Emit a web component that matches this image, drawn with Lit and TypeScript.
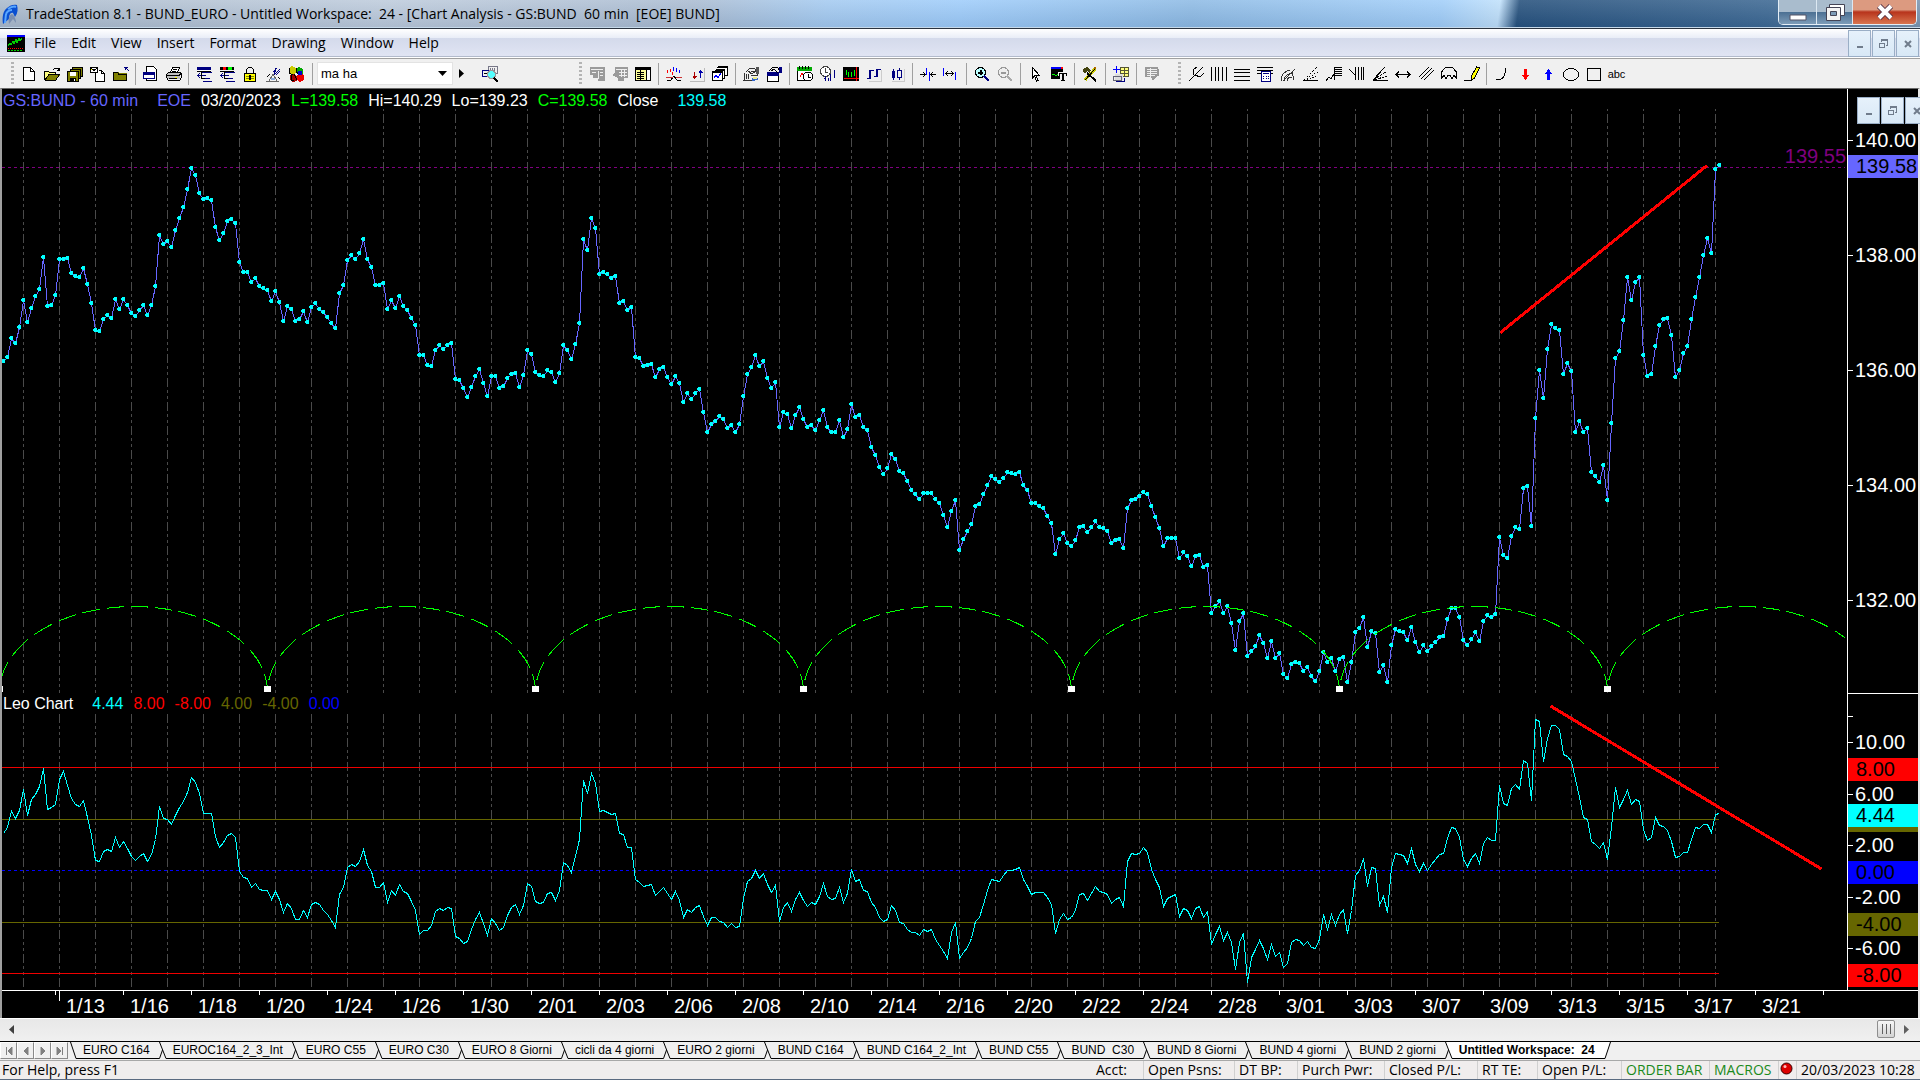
import { LitElement, html, css, svg, SVGTemplateResult } from "lit";
import { customElement, state } from "lit/decorators.js";
import { classMap } from "lit/directives/class-map.js";

/* ---------- market data ---------- */

interface Block {
  base: number;
  unit: number;
  values: number[];
}

/** Hourly closes, in chart rows: row = base + value / unit. */
const CLOSES: Block[] = [
  {
    base: 130,
    unit: 2.75,
    values: [
      635, 624, 572, 585, 541, 467, 528, 489, 456, 437, 349, 484, 481, 453, 354, 354, 352, 393, 401, 404,
      379, 423, 475, 550, 552, 519, 508, 517, 464, 492, 464, 481, 503, 511, 495, 481, 508, 481, 429, 288,
      313, 305, 321, 275, 242, 211, 162, 104, 123, 173, 189, 187, 192, 268, 302, 283, 250, 244, 255, 363,
      390, 390, 418, 407, 429, 434, 440, 470, 442, 473, 525, 484, 492, 525, 519, 497, 528, 486, 475, 492,
      500, 514, 530, 544, 448, 426, 357, 343, 354, 338, 299, 354, 376, 426, 426, 420, 492, 467, 489, 456,
      484, 495, 517, 536, 618, 618, 646, 649, 605, 591, 602, 591, 585, 684, 687, 709, 734, 706, 676, 657,
      695, 731, 676, 676, 709, 704, 682, 671, 668, 706, 673, 605, 616, 665, 673, 676, 660, 665, 693, 668,
      591, 605, 629, 588, 530, 299, 330, 242, 269, 396, 390, 396, 407, 401, 475, 470, 495, 486, 624, 627,
    ],
  },
  {
    base: 200,
    unit: 3,
    values: [
      497, 494, 492, 531, 507, 501, 531, 551, 528, 549, 605, 579, 597, 579, 567, 635, 695, 671, 663, 648,
      657, 684, 675, 696, 672, 588, 521, 501, 465, 497, 483, 534, 563, 546, 681, 635, 642, 684, 645, 621,
      657, 681, 675, 690, 660, 630, 681, 696, 696, 660, 711, 687, 611, 651, 645, 681, 690, 741, 765, 801,
      822, 804, 762, 777, 813, 819, 843, 870, 882, 897, 879, 879, 879, 897, 909, 945, 981, 933, 900, 1050,
      1017, 993, 972, 918, 912, 882, 855, 828, 837, 846, 834, 816, 819, 822, 816, 855, 870, 909, 909, 918,
      924, 948, 969, 1062, 1017, 999, 1029, 1038, 1020, 981, 978, 996, 981, 963, 981, 984, 993, 1029, 1020, 1017,
      1044, 924, 900, 897, 888, 876, 882, 918, 951, 984, 1038, 1014, 1014, 1014, 1074, 1056, 1068, 1098, 1068, 1065,
      1101, 1095, 1239, 1218, 1203, 1239, 1218, 1269, 1350, 1263, 1239, 1368, 1353, 1338, 1305, 1329, 1374, 1323, 1374, 1359,
    ],
  },
  {
    base: 130,
    unit: 2.75,
    values: [
      1497, 1507, 1469, 1463, 1466, 1488, 1477, 1501, 1515, 1488, 1435, 1463, 1452, 1488, 1455, 1449, 1518, 1463, 1380, 1369,
      1339, 1422, 1378, 1383, 1490, 1471, 1518, 1416, 1372, 1378, 1380, 1402, 1367, 1408, 1435, 1416, 1433, 1419, 1408, 1394,
      1391, 1345, 1314, 1314, 1339, 1402, 1416, 1400, 1380, 1405, 1350, 1334, 1339, 1331, 1119, 1169, 1177, 1116, 1092, 1097,
      984, 980, 1089, 792, 660, 737, 602, 534, 545, 550, 671, 640, 662, 830, 800, 830, 819, 940, 951, 968,
      921, 1017, 806, 627, 607, 522, 404, 467, 418, 404, 618, 676, 671, 594, 536, 519, 517, 563, 679, 660,
      613, 594, 519, 459, 404, 343, 297, 338, 107, 96,
    ],
  },
];

/** Leo Chart oscillator, same row encoding. */
const OSCILLATOR: Block[] = [
  {
    base: 690,
    unit: 3,
    values: [
      428, 412, 362, 385, 360, 298, 374, 328, 311, 288, 235, 357, 352, 341, 266, 244, 284, 324, 341, 349,
      329, 382, 436, 511, 514, 484, 476, 484, 440, 472, 452, 475, 497, 511, 497, 488, 514, 491, 448, 349,
      385, 388, 402, 376, 350, 332, 307, 262, 276, 309, 370, 370, 370, 438, 471, 456, 436, 430, 442, 543,
      562, 565, 592, 580, 598, 601, 601, 626, 604, 628, 667, 638, 654, 688, 688, 660, 682, 641, 637, 642,
      661, 671, 689, 712, 613, 592, 532, 523, 529, 514, 478, 526, 544, 592, 590, 577, 637, 601, 616, 581,
      604, 610, 632, 659, 733, 721, 721, 706, 662, 655, 661, 650, 654, 739, 743, 760, 752, 717, 687, 667,
      698, 734, 683, 699, 721, 712, 676, 650, 643, 673, 645, 580, 589, 632, 640, 637, 610, 607, 629, 601,
      517, 526, 547, 499, 448, 271, 310, 250, 280, 364, 361, 367, 371, 370, 430, 431, 472, 472, 568, 575,
      589, 586, 583, 616, 604, 592, 610, 626, 604, 631, 680, 658, 666, 651, 646, 679, 705, 682, 682, 693,
      695, 712, 700, 712, 709, 623, 574, 565, 541, 563, 550, 581, 605, 586, 694, 652, 637, 664, 627, 607,
      631, 647, 635, 643, 619, 580, 617, 628, 625, 592, 637, 608, 536, 572, 567, 601, 602, 637, 652, 681,
      694, 687, 646, 661, 696, 700, 716, 727, 725, 736, 718, 724, 716, 747, 766, 783, 805, 725, 697, 803,
      785, 772, 743, 692, 680, 641, 599, 568, 571, 574, 556, 541, 541, 538, 530, 568, 587, 611, 607, 607,
      607, 622, 643, 730, 686, 669, 686, 681, 659, 613, 610, 629, 609, 587, 604, 607, 613, 640, 628, 622,
      647, 514, 490, 493, 488, 472, 487, 536, 567, 592, 649, 623, 619, 613, 677, 655, 660, 683, 655, 649,
      680, 664, 762, 733, 709, 749, 727, 757, 838, 757, 730, 875, 802, 778, 751, 774, 808, 763, 799, 785,
      830, 818, 757, 748, 751, 766, 754, 771, 775, 748, 673, 716, 673, 706, 673, 658, 730, 659, 556, 541,
      503, 589, 530, 533, 646, 619, 667, 532, 490, 493, 496, 518, 473, 521, 544, 519, 539, 522, 506, 491,
      490, 443, 412, 415, 440, 508, 527, 505, 488, 520, 458, 442, 451, 451, 284, 338, 346, 294, 281, 298,
      211, 220, 331, 88, 92, 214, 145, 106, 106, 116, 193, 199, 214, 266, 320, 380, 386, 452, 463, 475,
      455, 508, 410, 290, 352, 328, 301, 343, 328, 332, 418, 451, 442, 380, 404, 409, 421, 452, 502, 499,
      487, 487, 446, 412, 415, 403, 403, 427, 371, 370,
    ],
  },
];

const FIRST_BAR = 3;
const BAR_STEP = 4;
const LAST_BAR = 1719;

function toPoints(blocks: Block[]): [number, number][] {
  return blocks
    .flatMap((b) => b.values.map((v) => Math.round(b.base + v / b.unit)))
    .map((y, i) => [FIRST_BAR + i * BAR_STEP, y] as [number, number]);
}

const pricePoints = toPoints(CLOSES);
const oscPoints = toPoints(OSCILLATOR);

const toPolyline = (pts: [number, number][]) => pts.map(([x, y]) => `${x + 0.5},${y + 0.5}`).join(" ");

const dotsPath = pricePoints.map(([x, y]) => `M${x - 1} ${y - 2}h3v4h-3v-1h-1v-2h1z`).join("");

const sessionLines = Array.from({ length: 48 }, (_, k) => 23.5 + 36 * k);

const CYCLE = 268;
const cycleAnchors = Array.from({ length: 7 }, (_, k) => -0.5 + CYCLE * k);

/** Half ellipse split into 18-on / 6-off dashes counted along the major axis. */
function cycleArc(start: number): string {
  const rx = CYCLE / 2;
  const ry = 86;
  const cx = start + rx;
  const cy = 692.5;
  const period = 24;
  let phase = 12;
  let px = start;
  let py = cy;
  let pen = false;
  let d = "";
  for (let i = 1; i <= 900; i++) {
    const t = Math.PI - (Math.PI * i) / 900;
    const x = cx + rx * Math.cos(t);
    const y = cy - ry * Math.sin(t);
    phase = (phase + Math.max(Math.abs(x - px), Math.abs(y - py))) % period;
    const on = phase < 18 && x < 1845;
    if (on) {
      d += `${pen ? "L" : "M"}${x.toFixed(1)} ${y.toFixed(1)}`;
    }
    pen = on;
    px = x;
    py = y;
  }
  return d;
}

const DATES = [
  "1/13", "1/16", "1/18", "1/20", "1/24", "1/26", "1/30", "2/01", "2/03", "2/06", "2/08", "2/10", "2/14",
  "2/16", "2/20", "2/22", "2/24", "2/28", "3/01", "3/03", "3/07", "3/09", "3/13", "3/15", "3/17", "3/21",
];

const OSC_TAGS = [
  { value: 8, name: "red" },
  { value: 4, name: "olive" },
  { value: 4.44, name: "cyan" },
  { value: 0, name: "blue" },
  { value: -4, name: "olive" },
  { value: -8, name: "red" },
];

const TABS = [
  "EURO C164", "EUROC164_2_3_Int", "EURO C55", "EURO C30", "EURO 8 Giorni", "cicli da 4 giorni",
  "EURO 2 giorni", "BUND C164", "BUND C164_2_Int", "BUND C55", "BUND\u00a0 C30", "BUND 8 Giorni",
  "BUND 4 giorni", "BUND 2 giorni", "Untitled Workspace:\u00a0 24",
];

/* ---------- toolbar icons, 16 x 16 ---------- */

const K = "#000";
const N = "#000080";
const line = (d: string, c = K) => svg`<path d=${d} fill="none" stroke=${c} />`;
const fill = (d: string, c: string) => svg`<path d=${d} fill=${c} />`;

const ICONS: Record<string, SVGTemplateResult> = {
  New: svg`${fill("M2 1h8l4 4v10H2z", "#fff")}${line("M2.5 1.5h7l4 4v9h-11zM9.5 1.5v4h4")}`,
  Open: svg`${fill("M1 5h4l1 1h6v3H5l-4 5z", "#ffff80")}${fill("M1 14l4-5h11l-4 5z", "#808000")}
    ${line("M.5 14V5.5h4l1 1h6V9M.5 14.5h11l4-6H5L1 14M9 3.5l2-1h3l1 2M13 4.5h2.5V2")}`,
  "Save all": svg`${fill("M5 1h11v9H5z", "#808000")}${line("M5.5 1.5h10v9h-10z")}
    ${fill("M3 3h11v9H3z", "#808000")}${line("M3.5 3.5h10v9h-10z")}
    ${fill("M0 5h12v11H0z", "#808000")}${line("M.5 5.5h11v10H.5z")}${fill("M3 6h6v4H3z", "#fff")}
    ${fill("M3 12h6v4H3z", K)}${fill("M7 13h1v2H7z", "#fff")}`,
  "Send mail": svg`${fill("M5 4h7l3 3v9H5z", "#fff")}${line("M5.5 7v8.5h9V7.5l-3-3H9M11.5 4.5v3h3")}
    ${fill("M0 1h8v6H0z", "#fff")}${line("M.5 1.5h7v5h-7zM1 2l3 2.5L7 2")}${line("M1 3.5h1", "#ff0")}`,
  "Close folder": svg`${fill("M0 6h5l1 1h8v8H0z", "#808000")}${line("M.5 14.5V6.5h4l1 1.5h8v6.5z")}
    ${line("M11 1.5h4M12.5 1v3M12 1l4 4", N)}`,
  "Page setup": svg`${fill("M3 0h8l3 3v12H3z", "#fff")}${line("M3.5.5h7l3 3v11h-10z")}
    ${fill("M0 6h12v7H0z", "#fff")}${line("M.5 6.5h11v6H.5z", N)}${fill("M0 6h12v3H0z", N)}`,
  Print: svg`${fill("M5 1h8l-2 6H3z", "#fff")}${line("M4.5 6.5l2-5h7l-2 5M7 3.5h4M6 5.5h4")}
    ${fill("M1 7h13v6H1z", "#c0c0c0")}${line("M.5 8.5l2-2h11l2 1v4l-2 3h-11l-2-3zM1 9.5h12l2-2M3 12.5h8")}
    ${fill("M9 11h2v1H9z", "#ff0")}`,
  "Format window": svg`${fill("M1 1h14v4H1z", "#fff")}${fill("M1 1h14v3H1z", N)}${line("M5.5 6.5h10M7 12.5h7M7 15.5h9M1.5 9.5h8M4 7L1.500 9.5l2.500 2.500", N)}${line("M5.5 6v6.500h3M1 5.5h14")}`,
  "Format colours": svg`${fill("M1 1h14v3H1z", K)}${fill("M4 1h3v3H4z", "#f00")}${fill("M9 1h4v3H9z", "#0f0")}
    ${line("M5.5 6.5h10M7 12.5h7M7 15.5h9M1.5 9.5h8M4 7L1.500 9.5l2.500 2.500", N)}${line("M5.5 6v6.500h3M1 5.5h14")}`,
  Lock: svg`${line("M4.5 8V3.5l2-2h3l2 2V8")}${fill("M2 8h12v8H2z", "#ff0")}${line("M2.5 7.5h11v8h-11z")}
    ${fill("M4 10h8v1H4zM4 12h8v1H4z", "#808000")}${fill("M7 9h2v5H7z", K)}`,
  Satellite: svg`${line("M9 9l2-7M9 9l6-6M8 6l4-4M11 9l4-4", N)}${line("M1 15.5h13M4 15l4-7 4 7M5 12.5h6", "#666")}${fill("M6 12h4v2H6z", "#8ad")}${line("M2 11l3-3M13 11l2 2")}`,
  Blocks: svg`${fill("M1 2l3-2 4 2v5l-4 2-3-2z", "#cc0")}${fill("M8 2l3-1 4 2v5l-4 1-3-2z", "#0a0")}
    ${fill("M9 9l3-2 4 2v5l-4 2-3-2z", "#e00")}${fill("M2 9l3-1 4 2v5l-4 1-3-2z", "#a60000")}
    ${line("M1.5 2v5l3 2M8.5 2v4l3 3M3 9v5l3 1M6 8l3 6")}${fill("M10 5h4v4h-4z", "#00c")}`,
  "Symbol lookup": svg`${line("M6.5 7V.5h9v7h-4M8.5 2v3M10.5 2v3M12.5 2v3", "#778")}${line("M.5 11V4.5h6v6z", N)}
    ${line("M2 7.5h3")}${fill("M8 5h3l2 2v3l-2 2H8L6 10V7z", "#5ff")}${line("M8 4.5h3l2.5 2.5v3L11 12.5H8L5.5 10V7z", "#999")}
    <path d="M12 12l4 4" stroke="#000" stroke-width="2" />`,
  "Quote grid": svg`${fill("M1 1h15v14H9v-3H4V9H1z", "#9a9a9a")}${line("M2 3.5h12M9.5 5v8M11 6.5h3M11 9.5h3M3 6.5h4", "#eee")}`,
  "Option grid": svg`${fill("M3 1h13v11h-4v3H6v-3L0 9l3-3z", "#9a9a9a")}${line("M4 3.5h11M7 6.5h8M7 9.5h8M9.5 4v7M12.5 4v7", "#eee")}`,
  "Market depth": svg`${fill("M0 3h11v12H0z", "#ffff9a")}${line("M.5 3v11.5h10.500V3M5.5 4v10M2 6.5h7M2 8.5h7M2 10.5h7M2 12.5h7")}
    ${fill("M11 3h4v11h-4z", "#fff")}${line("M11.5 4v10M11 14.5h4.500V1")}${fill("M0 1h16v3H0z", K)}`,
  Indicator: svg`${line("M1.5 4v3M4.5 3v3M6.5 6v3", "#f00")}${line("M7.5 1v4M10.5 2v4M13.5 4v3", "#00f")}
    ${line("M1 14.5h4M5 14l3-4 3 4M11 14.5h4")}${line("M0 11.5h7M10 11.5h6", "#c33")}`,
  "Buy and sell": svg`${line("M5.5 6v7M3.5 10.5h4M4 11.5h3", "#a00")}${line("M11.5 4v8M9.5 6.5h4M10 5.5h3", "#00a")}${line("M15.5 2v13H1", "#bbb")}`,
  "Chart stack": svg`${fill("M5 0h11v10H5z", "#fff")}${line("M5.5.5h10v9h-10M5 1.5h10")}${fill("M3 3h10v10H3z", "#fff")}${line("M3.5 3.5h9v9h-9M3 4.5h9")}
    ${fill("M0 5h11v10H0z", "#fff")}${line("M.5 5.5h10v9H.5zM0 6.5h10")}${line("M2 12l2-3 2 3 3-5", "#00f")}`,
  Properties: svg`${line("M3 6l4-4 5 1 2 3M5 5l4 3 4-3M1 7v7M3.5 8v5M5.5 8v5M0 14.5h9M8 5.5h6v4H8", "#333")}${fill("M9 12h6v2l-6 1z", "#3366cc")}${fill("M10 11h4v2h-4z", "#ee8")}${fill("M13 1h3v7h-3z", "#555")}`,
  "Window properties": svg`${fill("M1 6h12v10H1z", "#fff")}${line("M1.5 6.5h11v9h-11z")}${fill("M1 6h12v4H1z", N)}
    ${line("M3 5l4-4 5 1 2 3M5 5l3-2 4 4")}${fill("M13 1h3v6h-3z", N)}`,
  "Session times": svg`${fill("M0 1h15v4H0z", "#0a0")}${fill("M1 5h10v9H1z", "#fff")}${line("M.5 5v9.5h8M2 0v3M5 0v3M8 0v3M11 0v3")}
    ${line("M3 11l2-4 2 3", "#f00")}<circle cx="11" cy="10.5" r="4.5" fill="#fff" stroke="#000" />${line("M11 7.5v3.5h3")}`,
  "Bar interval": svg`<circle cx="5.5" cy="5.5" r="5" fill="#fff" stroke="#444" />${line("M5.5 2v4H8", "#444")}
    ${line("M5.5 10v5M10.5 8v7M14.5 4v8M8.5 12v3M4 12.5h1", N)}`,
  "Chart colours": svg`${fill("M0 1h16v14H0z", "#000")}${line("M3.5 4v5M5.5 6v5M8.5 6v5M11.5 4v6", "#0f0")}${line("M1 12.5h15M13.5 1v14", "#f00")}`,
  "OHLC bar": svg`<path d="M4 4v9M11 3v8" stroke="#000080" stroke-width="2" />${line("M1 12.5h3M5 4.5h3M8 10.5h3M12 3.5h3", N)}${line("M15.5 4v11H3", "#ccc")}`,
  Candlestick: svg`${fill("M3 5h3v7H3zM4 3h1v11H4z", N)}${line("M10.5 2v2M10.5 12v2M8.5 4.5h4v7h-4z", N)}${line("M15.5 3v12H3", "#ccc")}`,
  "Decrease spacing": svg`${line("M0 8.5h5M3 6l2 2.5L3 11M11 8.5h5M13 6l-2 2.5 2 2.5")}${line("M6.5 2v7M9.5 6v9", "#00f")}`,
  "Increase spacing": svg`${line("M3 7.5h7M5 5L3 7.500 5 10M8 5l2 2.5L8 10")}${line("M.5 2v8M12.5 6v8", "#00f")}`,
  "Zoom in": svg`<circle cx="6.5" cy="6.5" r="5" fill="#bff" stroke="#000" /><path d="M6.5 4v5M4 6.5h5" stroke="#000" stroke-width="2" /><path d="M10 10l5 5" stroke="#000080" stroke-width="2" />`,
  "Zoom out": svg`<circle cx="6.5" cy="6.5" r="5" fill="#eee" stroke="#999" /><path d="M4 6.5h5" stroke="#999" stroke-width="2" /><path d="M10 10l5 5" stroke="#aaa" stroke-width="2" />`,
  Pointer: svg`${fill("M4 1l8 8H8l2 5-2 1-2-5-2 2z", "#fff")}${line("M4.5 1.5v11l2-2.5 2 5 1.5-.5-2-5h3.5z")}`,
  "Text tool": svg`${fill("M0 1h12v12H0z", K)}${fill("M0 1h12v2H0z", "#00f")}${fill("M10 1h2v2h-2z", "#f00")}${line("M1 9l2-1 2 2 2-2", "#0f0")}
    ${fill("M7 6h9v4h-2v6H9v-6H7z", "#f0f0f0")}${fill("M8 7h8v3h-1V8h-2v6h1v1h-4v-1h1V8H9v2H8z", K)}`,
  Tools: svg`<path d="M13 3L3 14" stroke="#cc0" stroke-width="3" /><path d="M13 3L3 14" stroke="#000" stroke-width="1" /><path d="M5 7l9 8" stroke="#000" stroke-width="2" />${fill("M1 3l4-2 4 3-1 3-3-2-2 3-2-2z", "#444410")}${fill("M12 1h2v2h-2z", "#a60")}`,
  "Insert analysis": svg`${line("M3.5 0v7M0 3.5h7", "#00f")}${fill("M7 1h9v10H7z", "#ffff80")}${line("M7.5 1.5h8v9h-8zM11.5 2v8M8 4.5h7M8 7.5h7", "#553")}
    ${fill("M2 8h8v6H2z", "#ddd")}${line("M.5 10.5h8v4h-8z", "#667")}${line("M3 15.5h8V12", N)}`,
  Comment: svg`${fill("M1 1h13v2h1v7h-2l-4 5-2-4H1z", "#999")}${line("M3 3.5h10M3 5.5h10M3 7.5h10M3 9.5h8M6.5 2v9", "#eee")}`,
  Pitchfork: svg`${line("M1 15L15 1M6 9L5 4l4-3M7 9l5 2 4-4")}`,
  "Time lines": svg`${line("M.5 1v14M4.5 1v14M7.5 1v14M11.5 1v14M15.5 1v14")}`,
  "Price lines": svg`${line("M0 3.5h16M0 6.5h16M0 10.5h16M0 14.5h16")}`,
  Calculator: svg`${line("M0 1.5h16M0 4.5h16M0 7.5h16")}${fill("M4 5h10v10H4z", "#fff")}${line("M4.5 5.5h9v9.5h-9z", N)}${line("M6 7.5h6M6.5 10v1M6.5 12v1M9.500 10v1M9.5 12v1M11.5 10v1M11.500 12v1", N)}`,
  "Speed arcs": svg`${line("M1 15C1 8 6 5 10 4M4 15c0-5 3-7 8-8M7 15c0-3 2-4 5-3M3 15L15 3M12 5l2 9", "#333")}`,
  "Gann fan": svg`<path d="M1 14L14 1" stroke="#000" stroke-dasharray="2 2" /><path d="M1 14L15 6M4 14L15 10" stroke="#000" stroke-dasharray="1 2" />${line("M0 14.5h15")}`,
  "Fibonacci levels": svg`${line("M0 15l3-4 2 2 3-5M8.5 14V1M8 1.5h8M8 3.500h8M8 5.5h8M8 7.5h8M8 9.5h8")}`,
  "Fibonacci time": svg`${line("M0 3l6 6M6.5 1v13M9.5 1v13M12.5 1v13M14.5 1v13")}`,
  "Fan lines": svg`${line("M1 14L13 1M1 14.500h15")}<path d="M1 14L15 5M2 14l13-4" stroke="#000" stroke-dasharray="3 1" />`,
  "Horizontal line": svg`${line("M1 8.5h14M4 5.5l-3 3 3 3M12 5.5l3 3-3 3")}`,
  Parallels: svg`${line("M1 11L11 1M3 13L14 2M6 14L16 4")}`,
  Cycle: svg`${line("M.5 13V6l4-4.5h7l4 4.5v7M1 12l2-3 2 4 2-4h2l2 4 2-4 2 3")}`,
  Pencil: svg`${fill("M8 9l4-8 3 1-5 10-3 1z", "#ff0")}${line("M7.500 10l5-9 3 1-5 10-3 2zM0 14.5h7")}`,
  Arc: svg`${line("M2 14c7 0 9-3 10-12")}`,
  "Down arrow": svg`${fill("M7 3h3v6h2l-3.5 5L5 9h2z", "#f00")}`,
  "Up arrow": svg`${fill("M7 14h3V8h2L8.5 3 5 8h2z", "#00f")}`,
  Ellipse: svg`<ellipse cx="8" cy="8.5" rx="7.5" ry="6" fill="none" stroke="#000" />`,
  Rectangle: svg`${line("M1.5 2.5h13v12h-13z")}`,
};

const FILE_TOOLS = [
  ["New", "Open", "Save all", "Send mail", "Close folder"],
  ["Page setup", "Print"],
  ["Format window", "Format colours", "Lock", "Satellite", "Blocks"],
];

const CHART_TOOLS = [
  ["Quote grid", "Option grid", "Market depth"],
  ["Indicator", "Buy and sell", "Chart stack"],
  ["Properties", "Window properties"],
  ["Session times", "Bar interval", "Chart colours", "OHLC bar", "Candlestick"],
  ["Decrease spacing", "Increase spacing"],
  ["Zoom in", "Zoom out"],
  ["Pointer", "Text tool"],
  ["Tools"],
  ["Insert analysis"],
  ["Comment"],
];

const DRAW_TOOLS = [
  [
    "Pitchfork", "Time lines", "Price lines", "Calculator", "Speed arcs", "Gann fan", "Fibonacci levels",
    "Fibonacci time", "Fan lines", "Horizontal line", "Parallels", "Cycle", "Pencil",
  ],
  ["Arc", "Down arrow", "Up arrow", "Ellipse", "Rectangle"],
];

const reset = css`
  * {
    box-sizing: border-box;
  }
  button {
    margin: 0;
    padding: 0;
    border: 0;
    background: none;
    font: inherit;
    color: inherit;
  }
`;

/* ---------- inner window buttons ---------- */

@customElement("mdi-buttons")
class MdiButtons extends LitElement {
  static styles = [
    reset,
    css`
      :host {
        display: flex;
        gap: 1px;
      }
      .box {
        display: grid;
        place-items: center;
        width: 23px;
        height: 27px;
        border: 1px solid #9aaec6;
        background: linear-gradient(#e6f1fb, #d8e8f6);
      }
    `,
  ];

  render() {
    return html`
      <button class="box" aria-label="Minimize">
        <svg width="11" height="11" shape-rendering="crispEdges"><path d="M3 8h6v2H3z" fill="#707c8c" /></svg>
      </button>
      <button class="box" aria-label="Restore">
        <svg width="11" height="11" shape-rendering="crispEdges">
          <path d="M4 2.5h5.5V7H8M1.5 5.5h5v4h-5zM3.5 4V1.5h6" fill="none" stroke="#707c8c" />
        </svg>
      </button>
      <button class="box" aria-label="Close">
        <svg width="11" height="11"><path d="M3 3l6 6M9 3l-6 6" stroke="#707c8c" stroke-width="2" /></svg>
      </button>
    `;
  }
}

/* ---------- toolbar ---------- */

@customElement("tool-bar")
class ToolBar extends LitElement {
  static styles = [
    reset,
    css`
      :host {
        display: flex;
        align-items: center;
        height: 30px;
        padding-left: 8px;
        border-top: 1px solid #a0a0a0;
        background: #f0f0f0;
        font: 13px "Liberation Sans", Arial, sans-serif;
      }
      .grip {
        width: 3px;
        height: 24px;
        margin: 0 3px;
        background: repeating-linear-gradient(#b4b4b4 0 2px, transparent 2px 4px);
      }
      .group {
        display: flex;
      }
      .group + .group::before {
        content: "";
        width: 1px;
        margin: 0 3px;
        background: #a0a0a0;
      }
      .chart .group + .group::before {
        margin-left: 4px;
      }
      .chart,
      .file,
      .draw {
        display: flex;
      }
      .tool {
        display: grid;
        place-items: center;
        width: 23px;
        height: 22px;
      }
      .symbol {
        display: flex;
        align-items: center;
        width: 269px;
      }
      .symbol::before {
        content: "";
        width: 1px;
        height: 22px;
        margin: 0 4px 0 5px;
        background: #a0a0a0;
      }
      .combo {
        width: 136px;
        height: 23px;
        padding: 0 0 0 3px;
        border: 1px solid #e3e3e3;
        border-radius: 0;
        appearance: none;
        background: #fff;
        font: inherit;
        color: #000;
      }
      .combobox {
        display: grid;
        align-items: center;
      }
      .combobox > * {
        grid-area: 1 / 1;
      }
      .chevron {
        justify-self: end;
        margin-right: 6px;
        pointer-events: none;
      }
      .go {
        display: grid;
        place-items: center;
        width: 17px;
        height: 22px;
      }
      .lookup {
        margin-left: 8px;
      }
      .spacer {
        width: 12px;
      }
      .label {
        font-size: 11px;
      }
    `,
  ];

  private tool(name: string) {
    return html`<button class="tool" aria-label=${name}>
      <svg width="16" height="16" viewBox="0 0 16 16" shape-rendering="crispEdges">${ICONS[name]}</svg>
    </button>`;
  }

  private groups(list: string[][]) {
    return list.map((g) => html`<div class="group">${g.map((n) => this.tool(n))}</div>`);
  }

  render() {
    return html`
      <span class="grip"></span>
      <div class="file">${this.groups(FILE_TOOLS)}</div>
      <div class="symbol">
        <span class="combobox">
          <select class="combo" aria-label="Symbol">
            <option>ma ha</option>
          </select>
          <svg class="chevron" width="9" height="5"><path d="M0 0h9L4.5 5z" /></svg>
        </span>
        <button class="go" aria-label="Go">
          <svg width="5" height="9"><path d="M0 0v9l5-4.5z" /></svg>
        </button>
        <span class="lookup">${this.tool("Symbol lookup")}</span>
      </div>
      <span class="grip"></span>
      <div class="chart">${this.groups(CHART_TOOLS)}</div>
      <span class="spacer"></span>
      <span class="grip"></span>
      <div class="draw">${this.groups(DRAW_TOOLS)}</div>
      <button class="tool label" aria-label="Text label">abc</button>
    `;
  }
}

/* ---------- chart ---------- */

@customElement("chart-window")
class ChartWindow extends LitElement {
  static styles = [
    reset,
    css`
      :host {
        display: grid;
        grid-template-columns: 1fr 71px;
        grid-template-rows: 604px 297px 28px;
        position: relative;
        background: #000;
        border: solid #a0a0a0;
        border-width: 1px 2px 0;
        border-top-color: #696969;
        border-right-color: #e8e8e8;
        font: 16px/20px "Liberation Sans", Arial, sans-serif;
        color: #fff;
      }
      .pane {
        display: flex;
        flex-direction: column;
        min-width: 0;
      }
      .status {
        display: flex;
        gap: 10px;
        height: 20px;
        padding: 2px 0 0 1px;
        white-space: nowrap;
      }
      .lower .status {
        height: 21px;
        padding-top: 1px;
      }
      .wide {
        margin-right: 9px;
      }
      .periwinkle {
        color: #66f;
      }
      .lime {
        color: #0f0;
      }
      .aqua {
        color: #0ff;
      }
      .crimson {
        color: #f00;
      }
      .moss {
        color: #660;
      }
      .navy {
        color: #00f;
      }
      .plot {
        position: relative;
        font-size: 20px;
      }
      .plot svg {
        display: block;
        width: 100%;
      }
      .upper svg {
        height: 584px;
      }
      .lower svg {
        height: 276px;
        overflow: visible;
      }
      .level {
        position: absolute;
        top: 37px;
        right: 1px;
        color: #800080;
      }
      .scale {
        position: relative;
        display: flex;
        flex-direction: column;
        border-left: 1px solid #fff;
        font-size: 20px;
        line-height: 23px;
      }
      .scale.top {
        gap: 92px;
        padding-top: 40px;
      }
      .scale.bottom {
        justify-content: space-between;
        padding: 37px 0 30px;
        border-top: 1px solid #fff;
      }
      .mark {
        display: flex;
        align-items: center;
        gap: 2px;
        height: 23px;
      }
      .mark::before,
      .tick {
        content: "";
        width: 5px;
        height: 1px;
        background: #fff;
      }
      .tick {
        position: absolute;
        top: 22px;
        left: 0;
      }
      .tag {
        position: absolute;
        left: 0;
        right: 0;
        height: 23px;
        padding-left: 8px;
        color: #000;
      }
      .tag.last {
        top: 66px;
        background: #66f;
      }
      .tag.red {
        background: #f00;
      }
      .tag.olive {
        background: #660;
      }
      .tag.cyan {
        background: #0ff;
      }
      .tag.blue {
        background: #00f;
      }
      .dates {
        grid-column: 1 / -1;
        display: grid;
        grid-template-columns: 53fr repeat(26, 68fr) 95fr;
        border-top: 1px solid #fff;
        font-size: 20px;
        line-height: 30px;
        overflow: hidden;
      }
      .tail {
        border-left: 1px solid #fff;
        height: 4px;
      }
      .date {
        min-width: 0;
        padding-left: 7px;
        background: linear-gradient(#fff, #fff) 0 0 / 1px 4px no-repeat;
      }
      .date.first {
        padding-left: 11px;
        background:
          linear-gradient(#fff, #fff) 0 0 / 1px 4px no-repeat,
          linear-gradient(#fff, #fff) 4px 0 / 1px 10px no-repeat;
      }
      .controls {
        position: absolute;
        top: 8px;
        right: -10px;
      }
    `,
  ];

  private grid(from: number, to: number) {
    return svg`<g stroke="#4a4a4a" stroke-dasharray="9 3 3 3 3 3">
      ${sessionLines.map((x) => svg`<line x1=${x} x2=${x} y1=${from} y2=${to} />`)}
    </g>`;
  }

  render() {
    return html`
      <section class="pane upper">
        <div class="status">
          <span class="periwinkle wide">GS:BUND - 60 min</span>
          <span class="periwinkle">EOE</span>
          <span>03/20/2023</span>
          <span class="lime">L=139.58</span>
          <span>Hi=140.29</span>
          <span>Lo=139.23</span>
          <span class="lime">C=139.58</span>
          <span class="wide">Close</span>
          <span class="aqua">139.58</span>
        </div>
        <div class="plot">
          <svg viewBox="2 109 1845 584" preserveAspectRatio="none" shape-rendering="crispEdges" fill="none">
            ${this.grid(90, 693)}
            <line x1="2" x2="1845" y1="167.5" y2="167.5" stroke="#800080" stroke-dasharray="3 3" />
            <polyline points=${toPolyline(pricePoints)} stroke="#6666ff" />
            <path d=${dotsPath} fill="#00ffff" />
            ${cycleAnchors.map((x) => svg`<path d=${cycleArc(x)} stroke="#00ff00" />`)}
            ${cycleAnchors.map((x) => svg`<rect x=${x - 3.5} y="686" width="7" height="6" fill="#fff" />`)}
            <line x1="1500.5" y1="332.5" x2="1707" y2="165.5" stroke="#ff0000" stroke-width="3" />
          </svg>
          <span class="level">139.55</span>
        </div>
      </section>
      <div class="scale top">
        ${["140.00", "138.00", "136.00", "134.00", "132.00"].map((t) => html`<span class="mark">${t}</span>`)}
        <span class="tag last">139.58</span>
      </div>

      <section class="pane lower">
        <div class="status">
          <span class="wide">Leo Chart</span>
          <span class="aqua">4.44</span>
          <span class="crimson">8.00</span>
          <span class="crimson">-8.00</span>
          <span class="moss">4.00</span>
          <span class="moss">-4.00</span>
          <span class="navy">0.00</span>
        </div>
        <div class="plot">
          <svg viewBox="2 714 1845 276" preserveAspectRatio="none" shape-rendering="crispEdges" fill="none">
            ${this.grid(714, 987)}
            <path d="M2 767.5H${LAST_BAR}M2 973.5H${LAST_BAR}" stroke="#f00000" />
            <path d="M2 819.5H${LAST_BAR}M2 922.5H${LAST_BAR}" stroke="#666600" />
            <path d="M2 870.5H${LAST_BAR}" stroke="#0000ff" stroke-dasharray="3 3" />
            <polyline points=${toPolyline(oscPoints)} stroke="#00ffff" />
            <line x1="1550.5" y1="706" x2="1821.5" y2="869" stroke="#ff0000" stroke-width="3" />
          </svg>
        </div>
      </section>
      <div class="scale bottom">
        <span class="tick"></span>
        ${["10.00", "6.00", "2.00", "-2.00", "-6.00"].map((t) => html`<span class="mark">${t}</span>`)}
        ${OSC_TAGS.map(
          (t) => html`<span class="tag ${t.name}" style="top:${Math.round(167 - t.value * 12.88)}px"
            >${t.value.toFixed(2)}</span
          >`,
        )}
      </div>

      <div class="dates">
        <span></span>
        ${DATES.map((d, i) => html`<span class=${classMap({ date: true, first: i === 0 })}>${d}</span>`)}
        <span class="tail"></span>
      </div>
      <mdi-buttons class="controls"></mdi-buttons>
    `;
  }
}

/* ---------- workspace tabs ---------- */

@customElement("workspace-tabs")
class WorkspaceTabs extends LitElement {
  @state() private active = TABS.length - 1;

  static styles = [
    reset,
    css`
      :host {
        display: flex;
        height: 19px;
        border-top: 1px solid #000;
        background: #f0f0f0;
        font: 12px/17px "Liberation Sans", Arial, sans-serif;
        color: #000;
        overflow: hidden;
      }
      .nav {
        display: grid;
        place-items: center;
        width: 17px;
        height: 17px;
        border: 1px solid #fff;
        border-right-color: #8a8a8a;
        border-bottom-color: #8a8a8a;
      }
      .tab {
        height: 17px;
        padding: 0 8px 0 6px;
        border-bottom: 1px solid #000;
        white-space: nowrap;
      }
      .tab.active {
        background: #fff;
        font-weight: bold;
      }
      .slant {
        flex: none;
      }
    `,
  ];

  render() {
    const arrows = [
      ["First", "M2.5 1v8M8 1v8L4 5z"],
      ["Previous", "M7 1v8L3 5z"],
      ["Next", "M3 1v8l4-4z"],
      ["Last", "M7.5 1v8M2 1v8l4-4z"],
    ];
    return html`
      ${arrows.map(
        ([n, d]) => html`<button class="nav" aria-label=${n}>
          <svg width="10" height="10"><path d=${d} fill="#808080" stroke="#808080" stroke-width="1" /></svg>
        </button>`,
      )}
      ${TABS.map(
        (t, i) => html`
          <svg class="slant" width="9" height="17">
            ${i === this.active ? svg`<path d="M1 0h8v17L7 16z" fill="#fff" />` : ""}
            <path
              d=${i ? "M1.5 0L8 16.5H9M4.5 8L1.5 16.5H0" : "M2.5 0L8 16.5H9"}
              fill="none"
              stroke="#000"
            />
          </svg>
          <button class=${classMap({ tab: true, active: i === this.active })} @click=${() => (this.active = i)}>${t}</button>
        `,
      )}
      <svg class="slant" width="9" height="17">
        ${this.active === TABS.length - 1 ? svg`<path d="M0 0h7L2 16H0z" fill="#fff" />` : ""}
        <path d="M0 16.5H2L7.5 0" fill="none" stroke="#000" />
      </svg>
    `;
  }
}

/* ---------- application frame ---------- */

@customElement("app-root")
class AppRoot extends LitElement {
  static styles = [
    reset,
    css`
      :host {
        display: flex;
        flex-direction: column;
        min-height: 100vh;
        overflow: hidden;
        background: #f0f0f0;
        font: 14px/20px "Open Sans", "Noto Sans", sans-serif;
        color: #000;
      }
      .title {
        display: flex;
        align-items: center;
        gap: 8px;
        height: 29px;
        padding-left: 2px;
        border-bottom: 1px solid #2b3440;
        box-shadow: inset 0 -1px #c6d9ea;
        background:
          linear-gradient(rgba(255, 255, 255, 0.15), rgba(60, 80, 110, 0.12)),
          linear-gradient(
            98deg,
            #a9b9cb 0,
            #bccadb 20%,
            #a8bad0 36%,
            #a2c9f0 43%,
            #9ccbfa 50%,
            #8bb9e4 62%,
            #9fcdf9 75%,
            #bfe0fb 78%,
            #1f4b78 79%,
            #36638f 92%,
            #7a94ae 100%
          );
      }
      .name {
        flex: 1;
        margin: 0;
        font-size: 14px;
        font-weight: normal;
        white-space: pre;
      }
      .window {
        display: flex;
        align-self: flex-start;
        height: 25px;
        margin-right: 3px;
        border: 1px solid #e4eef6;
        border-top: 0;
        border-radius: 0 0 5px 5px;
        overflow: hidden;
      }
      .win {
        display: grid;
        place-items: center;
        width: 38px;
        border-right: 1px solid #dce8f2;
        background: linear-gradient(#a9bccd 0 48%, #4d7194 52%, #7d9cb8);
      }
      .win.restore {
        width: 36px;
      }
      .win.close {
        width: 63px;
        border-right: 0;
        background: linear-gradient(#dc9a80 0 40%, #b8341c 50%, #d9754f);
      }
      .menu {
        display: flex;
        align-items: center;
        height: 29px;
        padding: 0 1px 0 7px;
        border-bottom: 1px solid #fff;
        box-shadow: inset 0 -1px #b2bacb;
        background: linear-gradient(#fff 0, #e9edf7 32%, #d4daeb 34%, #e1e5f4 100%);
      }
      .items {
        display: flex;
        flex: 1;
        gap: 15px;
        margin-left: 9px;
      }
      .scroll {
        display: flex;
        align-items: center;
        height: 23px;
        padding: 0 6px 2px 3px;
        border-top: 1px solid #fff;
        background: linear-gradient(#e8e8e8, #f0f0f0);
      }
      .track {
        display: flex;
        flex: 1;
        justify-content: flex-end;
        padding-right: 3px;
      }
      .arrow {
        display: grid;
        place-items: center;
        width: 16px;
        height: 18px;
      }
      .thumb {
        display: grid;
        place-items: center;
        width: 18px;
        height: 18px;
        border: 1px solid #8e8e8e;
        border-radius: 2px;
        background: linear-gradient(#f6f6f6, #d4d4d4);
      }
      .statusbar {
        display: flex;
        flex: 1;
        align-items: center;
        padding: 0 2px;
        border-top: 1px solid #a8a8a8;
        border-bottom: 1px solid #5a6a80;
        background: #f0eded;
        line-height: 18px;
        white-space: nowrap;
      }
      .help {
        flex: 1;
      }
      .cell {
        height: 18px;
        padding-left: 4px;
        border-right: 1px solid #d0d0d0;
      }
      .acct {
        width: 52px;
      }
      .psns {
        width: 91px;
      }
      .bp {
        width: 63px;
      }
      .pwr {
        width: 87px;
      }
      .closed {
        width: 93px;
      }
      .rt {
        width: 60px;
      }
      .open {
        width: 84px;
      }
      .bar {
        width: 88px;
        color: #1b8a1b;
      }
      .macros {
        width: 69px;
        color: #1b8a1b;
      }
      .light {
        width: 18px;
        padding-left: 1px;
      }
      .clock {
        width: 121px;
        border-right: 0;
      }
    `,
  ];

  render() {
    return html`
      <header class="title">
        <svg width="16" height="22" viewBox="0 0 16 22">
          <path d="M1 21C0 14 1 8 5 5c3-3 7-4 10-3 1 4 1 8-2 12l-2-4c-3-1-4 3-4 6z" fill="#0a4fd0" />
          <path d="M6 6c3-2 6-3 8-2M4 12c0-3 3-5 6-5M3 20l1-9" stroke="#59a6ff" stroke-width="2" fill="none" />
          <path d="M7 21c-1-5 0-9 3-10 3 2 4 6 4 9l-3-4z" fill="#7b8fb0" />
        </svg>
        <h1 class="name">TradeStation 8.1 - BUND_EURO - Untitled Workspace:  24 - [Chart Analysis - GS:BUND  60 min  [EOE] BUND]</h1>
        <div class="window">
          <button class="win" aria-label="Minimize">
            <svg width="18" height="20"><path d="M1 13h16v5H1z" fill="#fff" stroke="#556" /></svg>
          </button>
          <button class="win restore" aria-label="Restore">
            <svg width="20" height="20">
              <path d="M4.5 2.5h15v11h-15z" fill="#fff" stroke="#445" />
              <path d="M1.5 5.5h14v13h-14z" fill="#f4f4f4" stroke="#445" />
              <path d="M5.5 9.5h6v4h-6z" fill="#7d9cb8" stroke="#445" />
            </svg>
          </button>
          <button class="win close" aria-label="Close">
            <svg width="20" height="18">
              <path d="M4 3l12 12M16 3L4 15" stroke="#534" stroke-width="6" />
              <path d="M4 3l12 12M16 3L4 15" stroke="#fff" stroke-width="4" />
            </svg>
          </button>
        </div>
      </header>

      <nav class="menu">
        <svg width="18" height="17" shape-rendering="crispEdges">
          <path d="M0 0h18v17H0z" fill="#000" />
          <path d="M0 0h18v2H0z" fill="#00f" />
          <path d="M1 11l2-3 1 2 2-4 1 3 2-5 1 4 2-5 1 3 2-3" fill="none" stroke="#0c0" />
          <path d="M1 13.5h16" stroke="#f00" stroke-dasharray="1 1" />
          <path d="M1 15.5h15" stroke="#0c0" stroke-dasharray="2 1" />
        </svg>
        <div class="items">
          ${["File", "Edit", "View", "Insert", "Format", "Drawing", "Window", "Help"].map(
            (m) => html`<button>${m}</button>`,
          )}
        </div>
        <mdi-buttons></mdi-buttons>
      </nav>

      <tool-bar></tool-bar>
      <chart-window></chart-window>

      <div class="scroll">
        <button class="arrow" aria-label="Scroll left">
          <svg width="5" height="9"><path d="M5 0v9L0 4.5z" fill="#404040" /></svg>
        </button>
        <div class="track">
          <button class="thumb" aria-label="Scroll position">
            <svg width="11" height="10" shape-rendering="crispEdges">
              <path d="M1.5 0v10M5.5 0v10M9.5 0v10" stroke="#606060" />
            </svg>
          </button>
        </div>
        <button class="arrow" aria-label="Scroll right">
          <svg width="5" height="9"><path d="M0 0v9l5-4.5z" fill="#606060" /></svg>
        </button>
      </div>

      <workspace-tabs></workspace-tabs>

      <footer class="statusbar">
        <span class="help">For Help, press F1</span>
        <span class="cell acct">Acct:</span>
        <span class="cell psns">Open Psns:</span>
        <span class="cell bp">DT BP:</span>
        <span class="cell pwr">Purch Pwr:</span>
        <span class="cell closed">Closed P/L:</span>
        <span class="cell rt">RT TE:</span>
        <span class="cell open">Open P/L:</span>
        <span class="cell bar">ORDER BAR</span>
        <span class="cell macros">MACROS</span>
        <span class="cell light">
          <svg width="13" height="13">
            <circle cx="6.5" cy="6.5" r="5.5" fill="#d00" stroke="#300" />
            <circle cx="5" cy="4.5" r="1.5" fill="#fbb" />
          </svg>
        </span>
        <span class="cell clock">20/03/2023 10:28</span>
      </footer>
    `;
  }
}
